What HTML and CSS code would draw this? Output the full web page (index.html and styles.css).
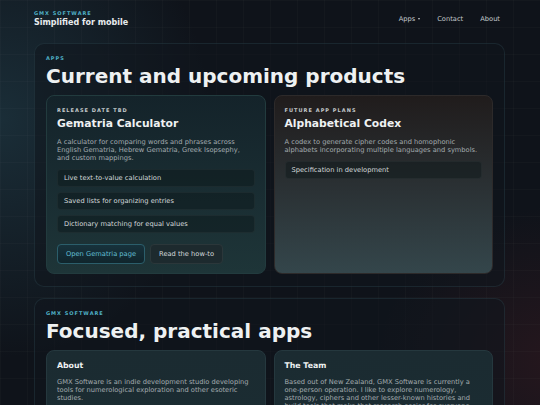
FILE: index.html
```html
<!DOCTYPE html>
<html lang="en">
<head>
<meta charset="utf-8">
<title>GMX Software</title>
<link rel="stylesheet" href="styles.css">
</head>
<body>
<header class="top">
  <div class="brand">
    <div class="eyebrow">GMX SOFTWARE</div>
    <div class="brand-title">Simplified for mobile</div>
  </div>
  <nav class="nav">
    <a class="nav-link">Apps <span class="caret"></span></a>
    <a class="nav-link">Contact</a>
    <a class="nav-link">About</a>
  </nav>
</header>
<main class="main">
  <section class="panel">
    <div class="eyebrow panel-eyebrow">APPS</div>
    <h1 class="panel-title">Current and upcoming products</h1>
    <div class="grid">
      <article class="card card-teal">
        <div class="card-label">RELEASE DATE TBD</div>
        <h2 class="card-title">Gematria Calculator</h2>
        <p class="card-text">A calculator for comparing words and phrases across English Gematria, Hebrew Gematria, Greek Isopsephy, and custom mappings.</p>
        <ul class="list">
          <li class="item">Live text-to-value calculation</li>
          <li class="item">Saved lists for organizing entries</li>
          <li class="item">Dictionary matching for equal values</li>
        </ul>
        <div class="actions">
          <a class="btn btn-primary">Open Gematria page</a>
          <a class="btn btn-ghost">Read the how-to</a>
        </div>
      </article>
      <article class="card card-warm">
        <div class="card-label">FUTURE APP PLANS</div>
        <h2 class="card-title">Alphabetical Codex</h2>
        <p class="card-text">A codex to generate cipher codes and homophonic alphabets incorporating multiple languages and symbols.</p>
        <ul class="list">
          <li class="item">Specification in development</li>
        </ul>
      </article>
    </div>
  </section>
  <section class="panel">
    <div class="eyebrow panel-eyebrow">GMX SOFTWARE</div>
    <h1 class="panel-title">Focused, practical apps</h1>
    <div class="grid">
      <article class="card card-info">
        <h3 class="info-title">About</h3>
        <p class="card-text">GMX Software is an indie development studio developing tools for numerological exploration and other esoteric studies.</p>
      </article>
      <article class="card card-info">
        <h3 class="info-title">The Team</h3>
        <p class="card-text">Based out of New Zealand, GMX Software is currently a one-person operation. I like to explore numerology, astrology, ciphers and other lesser-known histories and build tools that make that research easier for everyone.</p>
      </article>
    </div>
  </section>
</main>
</body>
</html>
```
FILE: styles.css
```css
* {
  box-sizing: border-box;
  margin: 0;
  padding: 0;
}

html, body {
  width: 540px;
  height: 405px;
  overflow: hidden;
}

body {
  font-family: "DejaVu Sans", "Noto Sans", sans-serif;
  color: #e6eaec;
  background-color: #0f131a;
  background-image:
    linear-gradient(rgba(255, 255, 255, 0.018) 1px, transparent 1px),
    linear-gradient(90deg, rgba(255, 255, 255, 0.018) 1px, transparent 1px),
    radial-gradient(ellipse 300px 340px at 0px 120px, rgba(40, 78, 92, 0.45), transparent 70%),
    radial-gradient(ellipse 260px 220px at 560px 360px, rgba(80, 30, 36, 0.35), transparent 70%);
  background-size: 27px 27px, 27px 27px, 100% 100%, 100% 100%;
}

.top {
  height: 43px;
  display: flex;
  justify-content: space-between;
  align-items: flex-start;
  padding: 10px 40px 0 34px;
}

.eyebrow {
  font-size: 5px;
  font-weight: 700;
  letter-spacing: 1px;
  line-height: 7px;
  color: #4fb0c6;
}

.brand-title {
  font-size: 8px;
  font-weight: 700;
  line-height: 10px;
  margin-top: 1px;
  color: #e8ecee;
}

.nav {
  display: flex;
  gap: 17px;
  margin-top: 4px;
}

.nav-link {
  font-size: 6.7px;
  line-height: 10px;
  color: #c3c9cd;
  display: flex;
  align-items: center;
  gap: 3px;
}

.caret {
  width: 0;
  height: 0;
  border-left: 1.5px solid transparent;
  border-right: 1.5px solid transparent;
  border-top: 2px solid #c3c9cd;
}

.main {
  display: flex;
  flex-direction: column;
  gap: 11px;
  padding: 0 35px 0 34px;
}

.panel {
  border: 1px solid rgba(110, 170, 185, 0.12);
  border-radius: 10px;
  padding: 11px 11px 12px;
  background: rgba(16, 22, 29, 0.55);
}

.panel-eyebrow {
  line-height: 6px;
}

.panel-title {
  font-size: 20px;
  font-weight: 700;
  line-height: 24px;
  margin-top: 3px;
  margin-bottom: 7px;
  color: #eef1f2;
}

.grid {
  display: grid;
  grid-template-columns: 1fr 1fr;
  gap: 8px;
}

.card {
  border: 1px solid rgba(255, 255, 255, 0.07);
  border-radius: 8px;
  padding: 11px 10px 9px;
}

.card-teal {
  background: linear-gradient(180deg, #14232a 0%, #1a2e33 60%, #1e3538 100%);
  border-color: #223b3e;
}

.card-warm {
  background: linear-gradient(180deg, #201c1c 0%, #2a3033 50%, #34464b 100%);
  border-color: #2d2a2a;
}

.card-info {
  background: linear-gradient(180deg, #1b2b31 0%, #1b2c32 100%);
  border-color: #25383e;
  padding: 10px 10px 9px;
}

.card-label {
  font-size: 5px;
  font-weight: 700;
  letter-spacing: 1.04px;
  line-height: 6px;
  margin-bottom: 4px;
  color: #c4cacc;
}

.card-title {
  font-size: 10.75px;
  font-weight: 700;
  line-height: 14px;
  margin-bottom: 7px;
  color: #eef1f2;
}

.info-title {
  font-size: 7.8px;
  font-weight: 700;
  line-height: 10px;
  margin-bottom: 7px;
  color: #eef1f2;
}

.card-text {
  font-size: 6.7px;
  line-height: 8px;
  color: #a3abaf;
}

.list {
  list-style: none;
  display: flex;
  flex-direction: column;
  gap: 5px;
  margin-top: 7px;
}

.item {
  height: 18px;
  display: flex;
  align-items: center;
  padding: 0 6px;
  font-size: 6.7px;
  color: #d3d9db;
  background: rgba(12, 22, 25, 0.45);
  border: 1px solid rgba(255, 255, 255, 0.045);
  border-radius: 4px;
}

.actions {
  display: flex;
  gap: 5px;
  margin-top: 11px;
}

.btn {
  height: 20px;
  display: flex;
  align-items: center;
  padding: 0 8px;
  font-size: 6.7px;
  border-radius: 4px;
  border: 1px solid transparent;
}

.btn-primary {
  background: linear-gradient(180deg, #17323c 0%, #10252c 100%);
  border-color: #2b5e6b;
  color: #62bfd3;
}

.btn-ghost {
  background: #1d2a2e;
  border-color: #2b373a;
  color: #d3d9db;
}
```
